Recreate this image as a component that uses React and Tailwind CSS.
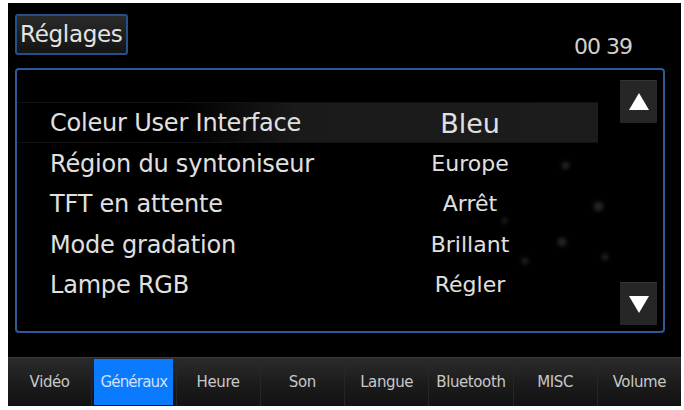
import React from 'react';

const rows = [
    { label: 'Coleur User Interface', value: 'Bleu', active: true },
    { label: 'Région du syntoniseur', value: 'Europe' },
    { label: 'TFT en attente', value: 'Arrêt' },
    { label: 'Mode gradation', value: 'Brillant' },
    { label: 'Lampe RGB', value: 'Régler' },
];

const tabs = ['Vidéo', 'Généraux', 'Heure', 'Son', 'Langue', 'Bluetooth', 'MISC', 'Volume'];

// faint bokeh dots behind the list
const dots = [
    { x: 560, y: 160, s: 7 },
    { x: 592, y: 200, s: 9 },
    { x: 556, y: 236, s: 8 },
    { x: 520, y: 256, s: 6 },
    { x: 600, y: 252, s: 6 },
    { x: 500, y: 216, s: 5 },
];

function ScrollButton({ down }) {
    return (
        <div className="w-[37px] h-[43px] bg-[#262626] flex items-center justify-center shadow-[inset_0_1px_0_#333]">
            <svg width="22" height="20" viewBox="0 0 22 20">
                {down
                    ? <polygon points="1,2 21,2 11,19" fill="#fff" />
                    : <polygon points="11,1 21,18 1,18" fill="#fff" />}
            </svg>
        </div>
    );
}

export default function App() {
    return (
        <div className="w-[684px] h-[410px] bg-white pl-2 pt-[3px] pr-[3px] pb-1" style={{ fontFamily: '"DejaVu Sans", sans-serif' }}>
            <div className="h-full bg-black flex flex-col relative overflow-hidden">
                {/* Header */}
                <div className="h-[65px] flex items-start justify-between pl-[7px] pr-[49px] pt-[11px]">
                    <div className="h-[41px] px-[3px] flex items-center border-2 border-[#24508a] rounded-[3px] bg-[linear-gradient(to_bottom,#2a2a2a,#141414)]">
                        <span className="text-[23px] text-[#e4e4e4] leading-none tracking-[-0.3px]">Réglages</span>
                    </div>
                    <span className="text-[22px] text-[#d0d0d0] leading-none mt-[22px] tracking-[-1px]">00 39</span>
                </div>

                {/* Settings panel */}
                <div className="ml-[7px] mr-[16px] h-[265px] border-2 border-[#2c5a98] rounded-[4px] flex relative">
                    {dots.map((d, i) => (
                        <div
                            key={i}
                            className="absolute rounded-full bg-[#2a2a2a] blur-[2px]"
                            style={{ left: d.x - 15, top: d.y - 68, width: d.s, height: d.s }}
                        />
                    ))}
                    <div className="flex-1 pt-[32px] relative">
                        {rows.map((r) => (
                            <div
                                key={r.label}
                                className={`w-[581px] h-[40.5px] flex items-center pl-[33px] ${r.active ? 'bg-[linear-gradient(to_right,transparent_28%,#1a1a1a_48%,#1c1c1c_100%)] border-y border-[#121212]' : ''}`}
                            >
                                <span className="w-[330px] text-[24px] text-[#e0e0e0] leading-none tracking-[-0.2px] pt-[2px]">{r.label}</span>
                                <span className={`w-[180px] text-center leading-none text-[#e0e0e0] pt-[2px] ${r.active ? 'text-[27px]' : 'text-[22px]'}`}>
                                    {r.value}
                                </span>
                            </div>
                        ))}
                    </div>
                    <div className="flex flex-col justify-between pt-[10px] pb-[6px] pr-[6px]">
                        <ScrollButton />
                        <ScrollButton down />
                    </div>
                </div>

                {/* Tab bar */}
                <div className="mt-auto h-[49px] flex border-t border-[#3a3a3a] bg-[linear-gradient(to_bottom,#2b2b2b,#1a1a1a_60%,#121212)]">
                    {tabs.map((t, i) => (
                        <div
                            key={t}
                            className={`flex-1 flex items-center justify-center ${i > 0 ? 'border-l border-[#262626]' : ''}`}
                        >
                            {t === 'Généraux' ? (
                                <div className="w-[79px] h-[46px] bg-[#0a7aff] flex items-center justify-center">
                                    <span className="text-[15px] text-[#cfe2ff] tracking-[-0.8px]">{t}</span>
                                </div>
                            ) : (
                                <span className="text-[15px] text-[#c8c8c8] tracking-[-0.4px]">{t}</span>
                            )}
                        </div>
                    ))}
                </div>
            </div>
        </div>
    );
}
